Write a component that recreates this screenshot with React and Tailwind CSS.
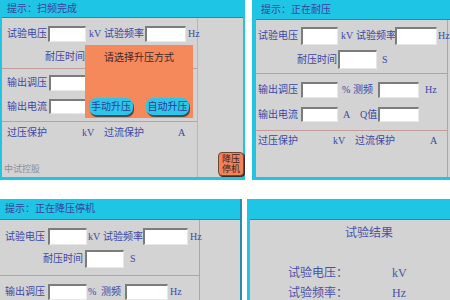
import React from 'react'

const FONT = { fontFamily: '"Liberation Serif", "Noto Sans CJK SC", serif' }

// sunken white entry box
function Field({ w, h = 'h-[16px]' }) {
    return (
        <span className={`${w} ${h} shrink-0 bg-white border-t-2 border-l-2 border-t-[#7c7c7c] border-l-[#7c7c7c] border-b border-r border-b-[#e8e8e8] border-r-[#e8e8e8]`} />
    )
}

function T({ w, className = '', children }) {
    return <span className={`${w ?? ''} shrink-0 whitespace-nowrap ${className}`}>{children}</span>
}

function Header({ h, text }) {
    return (
        <div className={`${h} bg-[#1fc5e5] border-b border-b-[#1990ae] flex items-center pl-[5px] text-[10px] leading-none text-[#3a3f9e]`}>
            {text}
        </div>
    )
}

function PanelScan() {
    return (
        <div className="relative w-[245px] h-[180px] shrink-0 border-l-2 border-r-2 border-b-[3px] border-[#23c3e3] bg-[#d3d3d3] flex flex-col">
            <Header h="h-[18px]" text="提示：扫频完成" />
            <div className="flex flex-1 text-[10px] leading-none text-[#3c47a6]">
                <div className="w-[196px] flex flex-col border-r border-r-[#bfb3b3]">
                    <div className="h-[51px] border-b border-b-[#c39c9c] pt-[8px]">
                        <div className="flex items-center h-[16px]">
                            <T w="w-[46px]" className="pl-[5px]">试验电压</T>
                            <Field w="w-[38px]" />
                            <T w="w-[18px]" className="pl-[3px]">kV</T>
                            <T w="w-[41px]">试验频率</T>
                            <Field w="w-[41px]" />
                            <T className="pl-[2px]">Hz</T>
                        </div>
                        <div className="flex items-center h-[18px] mt-[6px]">
                            <T w="w-[43px]" />
                            <T w="w-[41px]">耐压时间</T>
                            <Field w="w-[38px]" h="h-[18px]" />
                        </div>
                    </div>
                    <div className="h-[53px] border-b border-b-[#c39c9c] pt-[6px]">
                        <div className="flex items-center h-[16px]">
                            <T w="w-[47px]" className="pl-[5px]">输出调压</T>
                            <Field w="w-[38px]" />
                        </div>
                        <div className="flex items-center h-[15px] mt-[8px]">
                            <T w="w-[47px]" className="pl-[5px]">输出电流</T>
                            <Field w="w-[38px]" h="h-[15px]" />
                        </div>
                    </div>
                    <div className="flex-1 flex flex-col pt-[4px]">
                        <div className="flex items-center h-[14px]">
                            <T w="w-[80px]" className="pl-[5px]">过压保护</T>
                            <T w="w-[22px]">kV</T>
                            <T w="w-[74px]">过流保护</T>
                            <T>A</T>
                        </div>
                        <div className="mt-auto mb-[3px] pl-[2px] text-[9px] text-[#8d8d9c]">中试控股</div>
                    </div>
                </div>
            </div>

            {/* boost mode chooser */}
            <div className="absolute left-[83px] top-[45px] w-[108px] h-[73px] bg-[#f5895c] flex flex-col items-center">
                <div className="mt-[7px] text-[10px] leading-[12px] text-[#3a2a2a]">请选择升压方式</div>
                <div className="mt-auto mb-[3px] w-full flex justify-between px-[4px]">
                    <button className="w-[44px] h-[17px] rounded-[7px] bg-[#2ec6e8] shadow-[1px_2px_0_#4a4a4a] text-[10px] leading-none text-[#2c3a94]">手动升压</button>
                    <button className="w-[43px] h-[17px] rounded-[7px] bg-[#2ec6e8] shadow-[1px_2px_0_#4a4a4a] text-[10px] leading-none text-[#2c3a94]">自动升压</button>
                </div>
            </div>

            <button className="absolute left-[216px] top-[152px] w-[26px] h-[24px] rounded-[4px] bg-[#f3825a] border border-[#6b4a3a] shadow-[1px_1px_0_#3a2a2a] text-[9px] leading-[10px] text-[#3a2020] flex flex-col items-center justify-center">
                <span>降压</span>
                <span>停机</span>
            </button>
        </div>
    )
}

function PanelHold() {
    return (
        <div className="w-[198px] h-[180px] shrink-0 border-l-4 border-b-[3px] border-[#23c3e3] bg-[#d3d3d3] flex flex-col">
            <Header h="h-[20px]" text="提示：正在耐压" />
            <div className="flex flex-1 text-[10px] leading-none text-[#3c47a6]">
                <div className="w-[192px] flex flex-col border-r border-r-[#c39c9c]">
                    <div className="h-[54px] border-b border-b-[#c39c9c] pt-[7px]">
                        <div className="flex items-center h-[18px]">
                            <T w="w-[45px]" className="pl-[2px]">试验电压</T>
                            <Field w="w-[37px]" h="h-[18px]" />
                            <T w="w-[18px]" className="pl-[3px]">kV</T>
                            <T w="w-[39px]">试验频率</T>
                            <Field w="w-[42px]" h="h-[18px]" />
                            <T className="pl-[1px]">Hz</T>
                        </div>
                        <div className="flex items-center h-[19px] mt-[5px]">
                            <T w="w-[41px]" />
                            <T w="w-[41px]">耐压时间</T>
                            <Field w="w-[39px]" h="h-[19px]" />
                            <T className="pl-[5px]">S</T>
                        </div>
                    </div>
                    <div className="h-[57px] border-b border-b-[#c39c9c] pt-[8px]">
                        <div className="flex items-center h-[16px]">
                            <T w="w-[45px]" className="pl-[2px]">输出调压</T>
                            <Field w="w-[37px]" />
                            <T w="w-[15px]" className="pl-[4px]">%</T>
                            <T w="w-[25px]">测频</T>
                            <Field w="w-[41px]" />
                            <T className="pl-[6px]">Hz</T>
                        </div>
                        <div className="flex items-center h-[15px] mt-[9px]">
                            <T w="w-[45px]" className="pl-[2px]">输出电流</T>
                            <Field w="w-[37px]" h="h-[15px]" />
                            <T w="w-[22px]" className="pl-[5px]">A</T>
                            <T w="w-[18px]">Q值</T>
                            <Field w="w-[41px]" h="h-[15px]" />
                        </div>
                    </div>
                    <div className="pt-[4px]">
                        <div className="flex items-center h-[12px]">
                            <T w="w-[77px]" className="pl-[2px]">过压保护</T>
                            <T w="w-[22px]">kV</T>
                            <T w="w-[75px]">过流保护</T>
                            <T>A</T>
                        </div>
                    </div>
                </div>
            </div>
        </div>
    )
}

function PanelStop() {
    return (
        <div className="w-[242px] h-[101px] shrink-0 border-r-2 border-r-[#2a8db0] bg-[#d3d3d3] flex flex-col">
            <Header h="h-[21px]" text="提示：正在降压停机" />
            <div className="flex flex-1 text-[10px] leading-none text-[#3c47a6]">
                <div className="w-[200px] flex flex-col border-r border-r-[#c39c9c]">
                    <div className="h-[56px] border-b border-b-[#c39c9c] pt-[8px]">
                        <div className="flex items-center h-[17px]">
                            <T w="w-[48px]" className="pl-[5px]">试验电压</T>
                            <Field w="w-[39px]" h="h-[17px]" />
                            <T w="w-[16px]" className="pl-[1px]">kV</T>
                            <T w="w-[40px]">试验频率</T>
                            <Field w="w-[45px]" h="h-[17px]" />
                            <T className="pl-[2px]">Hz</T>
                        </div>
                        <div className="flex items-center h-[18px] mt-[5px]">
                            <T w="w-[43px]" />
                            <T w="w-[42px]">耐压时间</T>
                            <Field w="w-[39px]" h="h-[18px]" />
                            <T className="pl-[6px]">S</T>
                        </div>
                    </div>
                    <div className="pt-[8px]">
                        <div className="flex items-center h-[16px]">
                            <T w="w-[48px]" className="pl-[5px]">输出调压</T>
                            <Field w="w-[39px]" />
                            <T w="w-[14px]" className="pl-[1px]">%</T>
                            <T w="w-[24px]">测频</T>
                            <Field w="w-[43px]" />
                            <T className="pl-[2px]">Hz</T>
                        </div>
                    </div>
                </div>
            </div>
        </div>
    )
}

function PanelResult() {
    return (
        <div className="w-[203px] h-[101px] shrink-0 border-l-[3px] border-[#23c3e3] bg-[#d3d3d3] flex flex-col">
            <div className="h-[21px] bg-[#1fc5e5] border-b border-b-[#1990ae]" />
            <div className="flex flex-col text-[12px] leading-[14px] text-[#4a52a8]">
                <div className="mt-[6px] pl-[95px]">试验结果</div>
                <div className="flex mt-[26px] pl-[38px]">
                    <T w="w-[104px]">试验电压：</T>
                    <T>kV</T>
                </div>
                <div className="flex mt-[6px] pl-[38px]">
                    <T w="w-[104px]">试验频率：</T>
                    <T>Hz</T>
                </div>
            </div>
        </div>
    )
}

export default function App() {
    return (
        <div className="w-[450px] h-[300px] overflow-hidden bg-white flex flex-col" style={FONT}>
            <div className="flex">
                <PanelScan />
                <div className="w-[7px] shrink-0" />
                <PanelHold />
            </div>
            <div className="flex mt-[19px]">
                <PanelStop />
                <div className="w-[5px] shrink-0" />
                <PanelResult />
            </div>
        </div>
    )
}
